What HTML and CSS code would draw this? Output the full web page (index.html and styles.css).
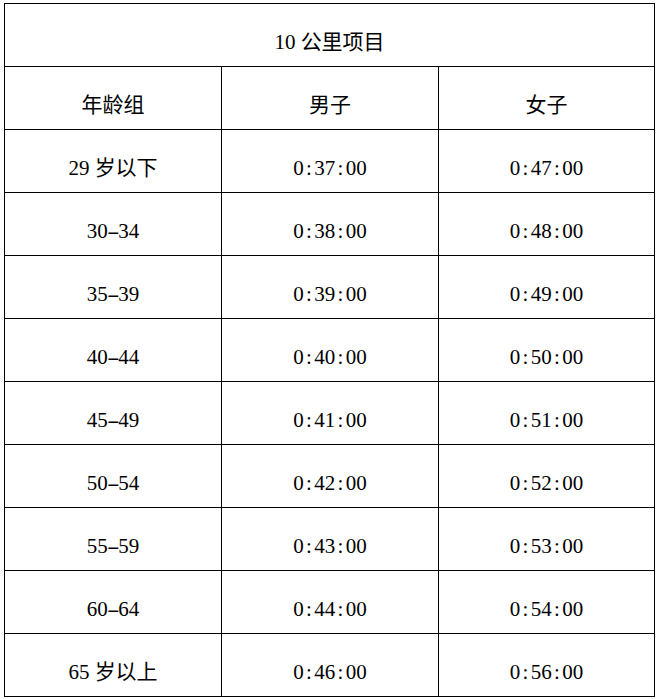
FILE: index.html
```html
<!DOCTYPE html>
<html lang="zh">
<head>
<meta charset="utf-8">
<link rel="stylesheet" href="styles.css">
</head>
<body>
<div class="grid">
  <div class="cell title">10 公里项目</div>
  <div class="cell">年龄组</div>
  <div class="cell">男子</div>
  <div class="cell">女子</div>

  <div class="cell">29 岁以下</div>
  <div class="cell">0<span class="c">:</span>37<span class="c">:</span>00</div>
  <div class="cell">0<span class="c">:</span>47<span class="c">:</span>00</div>

  <div class="cell">30<span class="d">-</span>34</div>
  <div class="cell">0<span class="c">:</span>38<span class="c">:</span>00</div>
  <div class="cell">0<span class="c">:</span>48<span class="c">:</span>00</div>

  <div class="cell">35<span class="d">-</span>39</div>
  <div class="cell">0<span class="c">:</span>39<span class="c">:</span>00</div>
  <div class="cell">0<span class="c">:</span>49<span class="c">:</span>00</div>

  <div class="cell">40<span class="d">-</span>44</div>
  <div class="cell">0<span class="c">:</span>40<span class="c">:</span>00</div>
  <div class="cell">0<span class="c">:</span>50<span class="c">:</span>00</div>

  <div class="cell">45<span class="d">-</span>49</div>
  <div class="cell">0<span class="c">:</span>41<span class="c">:</span>00</div>
  <div class="cell">0<span class="c">:</span>51<span class="c">:</span>00</div>

  <div class="cell">50<span class="d">-</span>54</div>
  <div class="cell">0<span class="c">:</span>42<span class="c">:</span>00</div>
  <div class="cell">0<span class="c">:</span>52<span class="c">:</span>00</div>

  <div class="cell">55<span class="d">-</span>59</div>
  <div class="cell">0<span class="c">:</span>43<span class="c">:</span>00</div>
  <div class="cell">0<span class="c">:</span>53<span class="c">:</span>00</div>

  <div class="cell">60<span class="d">-</span>64</div>
  <div class="cell">0<span class="c">:</span>44<span class="c">:</span>00</div>
  <div class="cell">0<span class="c">:</span>54<span class="c">:</span>00</div>

  <div class="cell">65 岁以上</div>
  <div class="cell">0<span class="c">:</span>46<span class="c">:</span>00</div>
  <div class="cell">0<span class="c">:</span>56<span class="c">:</span>00</div>
</div>
</body>
</html>
```

FILE: styles.css
```css
html, body {
  margin: 0;
  background: #fff;
}
body {
  padding: 3px 0 0 4px;
  font-family: "Liberation Serif", "Noto Sans CJK SC", serif;
  font-size: 21px;
  color: #000;
}
.grid {
  display: grid;
  grid-template-columns: 216px 216px 215px;
  grid-auto-rows: 62px;
  gap: 1px;
  padding: 1px;
  background: #000;
  width: max-content;
}
.cell {
  background: #fff;
  display: flex;
  align-items: center;
  justify-content: center;
  padding-top: 15px;
  box-sizing: border-box;
  white-space: nowrap;
  line-height: 21px;
}
.title {
  grid-column: 1 / 4;
}
.c {
  display: inline-block;
  width: 0.5em;
  text-align: center;
}
.d {
  display: inline-block;
  width: 0.5em;
  text-align: center;
  transform: scaleX(1.8);
}
```
